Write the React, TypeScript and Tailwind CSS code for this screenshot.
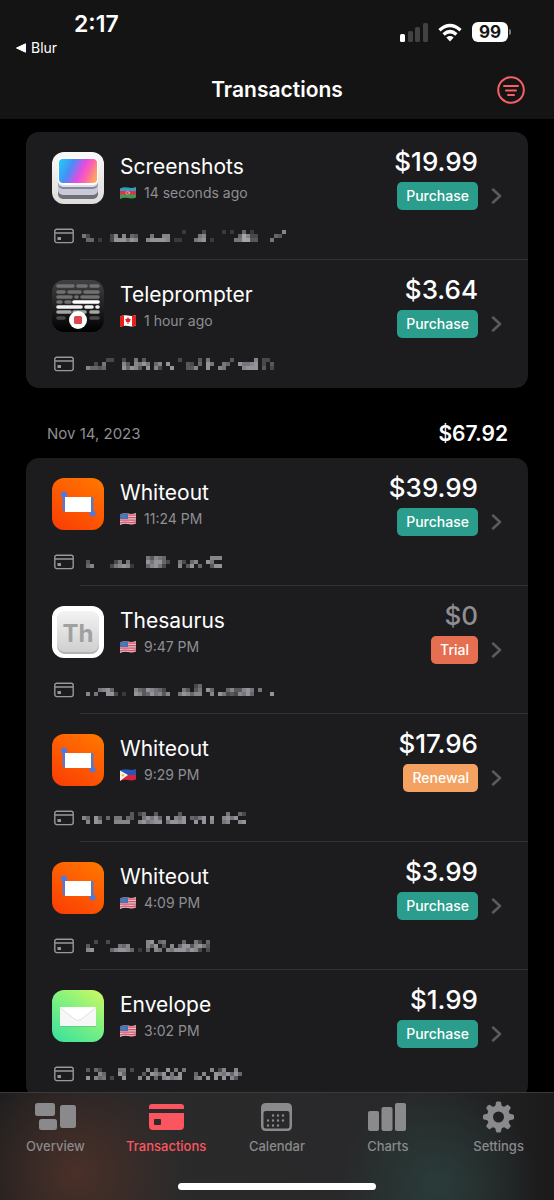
import type { ReactNode } from "react";

type Kind = "Purchase" | "Trial" | "Renewal";
type AppName = "Screenshots" | "Teleprompter" | "Whiteout" | "Thesaurus" | "Envelope";
type Country = "az" | "ca" | "us" | "ph";

interface Transaction {
  app: AppName;
  country: Country;
  time: string;
  price: string;
  kind: Kind;
  // Three rows of mosaic cells, each cell is column * 10 + tone
  mosaic: number[][];
}

const latest: Transaction[] = [
  {
    app: "Screenshots",
    country: "az",
    time: "14 seconds ago",
    price: "$19.99",
    kind: "Purchase",
    mosaic: [
      [252, 303, 352, 372, 405, 422, 507],
      [6, 13, 73, 87, 107, 125, 134, 176, 207, 217, 296, 307, 395, 409, 417, 423, 433, 485, 494],
      [15, 25, 42, 73, 88, 98, 108, 116, 128, 137, 167, 178, 188, 198, 208, 217, 232, 242, 286, 297, 308, 322, 386, 396, 409, 419, 424, 434, 476],
    ],
  },
  {
    app: "Teleprompter",
    country: "ca",
    time: "1 hour ago",
    price: "$3.64",
    kind: "Purchase",
    mosaic: [
      [63, 73, 103, 136, 154, 243, 294, 316, 374, 437, 453, 463],
      [33, 56, 107, 114, 137, 146, 158, 166, 185, 197, 218, 264, 273, 295, 318, 326, 356, 365, 398, 406, 416, 427, 438, 453, 474],
      [17, 25, 35, 44, 55, 108, 115, 128, 137, 144, 168, 187, 193, 228, 264, 274, 287, 318, 347, 356, 407, 418, 428, 438, 454, 473],
    ],
  },
];

const november: Transaction[] = [
  {
    app: "Whiteout",
    country: "us",
    time: "11:24 PM",
    price: "$39.99",
    kind: "Purchase",
    mosaic: [
      [166, 174, 187, 196, 205, 327, 337, 347],
      [14, 83, 96, 116, 168, 176, 188, 198, 205, 213, 246, 253, 275, 287, 318, 326],
      [15, 27, 73, 86, 97, 108, 117, 122, 165, 177, 188, 196, 203, 247, 264, 278, 295, 324, 338, 348],
    ],
  },
  {
    app: "Thesaurus",
    country: "us",
    time: "9:47 PM",
    price: "$0",
    kind: "Trial",
    mosaic: [
      [283, 295],
      [46, 57, 68, 75, 137, 145, 154, 168, 177, 186, 195, 203, 256, 264, 284, 296, 318, 325, 365, 377, 384, 394, 407, 418, 426, 446],
      [17, 36, 68, 78, 83, 102, 138, 147, 154, 165, 178, 186, 197, 204, 217, 246, 258, 267, 275, 287, 297, 327, 348, 356, 363, 374, 383, 397, 406, 418, 425, 478],
    ],
  },
  {
    app: "Whiteout",
    country: "ph",
    time: "9:29 PM",
    price: "$17.96",
    kind: "Renewal",
    mosaic: [
      [124, 143, 155, 184, 244, 366, 395, 403],
      [7, 15, 38, 44, 65, 86, 96, 115, 124, 156, 168, 176, 188, 195, 218, 237, 246, 258, 275, 284, 296, 308, 328, 357, 368, 376, 388],
      [17, 38, 47, 87, 97, 107, 117, 147, 158, 166, 177, 188, 198, 216, 228, 238, 247, 258, 288, 308, 327, 356, 367, 397, 408],
    ],
  },
  {
    app: "Whiteout",
    country: "us",
    time: "4:09 PM",
    price: "$3.99",
    kind: "Purchase",
    mosaic: [
      [33, 63, 167, 178, 195, 206, 255, 286, 293, 315],
      [14, 96, 105, 117, 167, 175, 188, 204, 227, 245, 258, 268, 274, 287, 298, 306, 314],
      [17, 28, 75, 87, 98, 108, 117, 125, 142, 165, 187, 196, 217, 226, 238, 248, 258, 266, 278, 287, 293, 313],
    ],
  },
  {
    app: "Envelope",
    country: "us",
    time: "3:02 PM",
    price: "$1.99",
    kind: "Purchase",
    mosaic: [
      [14, 35, 43, 96, 106, 123, 167, 185, 218, 236, 256, 327, 343, 357, 387],
      [47, 55, 98, 105, 154, 178, 187, 195, 208, 226, 248, 285, 307, 338, 347, 356, 368, 375, 388, 395],
      [18, 37, 45, 56, 73, 108, 147, 168, 185, 207, 218, 226, 237, 248, 286, 297, 318, 338, 358, 377, 384],
    ],
  },
];

const badgeColors: Record<Kind, string> = {
  Purchase: "bg-[#2a9d8c]",
  Trial: "bg-[#e76f51]",
  Renewal: "bg-[#f4a261]",
};

const appIcons: Record<AppName, ReactNode> = {
  Screenshots: (
    <>
      <defs>
        <linearGradient id="shotFace" x1="0" y1="0.3" x2="1" y2="0.6">
          <stop offset="0" stopColor="#22c4f4" />
          <stop offset="0.3" stopColor="#4a8cf8" />
          <stop offset="0.6" stopColor="#e94be0" />
          <stop offset="0.8" stopColor="#fb6aa4" />
          <stop offset="1" stopColor="#fda463" />
        </linearGradient>
        <linearGradient id="shotBg" x1="0" y1="0" x2="0" y2="1">
          <stop offset="0" stopColor="#fafafa" />
          <stop offset="1" stopColor="#dddcda" />
        </linearGradient>
      </defs>
      <rect width="52" height="52" rx="12" fill="url(#shotBg)" />
      <rect x="6" y="30" width="40" height="17" rx="5" fill="#6f6f77" />
      <rect x="6" y="27" width="40" height="16" rx="5" fill="#c9cad8" />
      <rect x="6" y="25" width="40" height="12" rx="5" fill="#85879c" />
      <rect x="6" y="22" width="40" height="13" rx="5" fill="#dcdde8" />
      <rect x="6" y="5" width="40" height="28" rx="5" fill="#fff" />
      <rect x="7" y="7" width="38" height="24" rx="4" fill="url(#shotFace)" />
    </>
  ),
  Teleprompter: (
    <>
      <defs>
        <linearGradient id="teleBg" x1="0" y1="0" x2="0" y2="1">
          <stop offset="0" stopColor="#414141" />
          <stop offset="1" stopColor="#000" />
        </linearGradient>
      </defs>
      <rect width="52" height="52" rx="12" fill="url(#teleBg)" />
      <g strokeWidth="3.600" strokeLinecap="round" stroke="#707070">
        <path d="M6 6h15M26 6h8M39 6h7M6 12h6M17 12h11M33 12h13M6 17h13M24 17h1M30 17h16M6 22h3M14 22h4" />
        <path d="M22 22h24" stroke="#fff" />
        <path d="M6 27h23M34 27h6M45 27h1" stroke="#f2f2f2" />
        <path d="M6 32h12M22 32h11M39 32h7" stroke="#a5a5a5" />
        <path d="M6 38h6M39 38h7" stroke="#4a4a4a" />
      </g>
      <circle cx="26" cy="40" r="9" fill="#fff" />
      <rect x="22" y="36" width="8" height="8" rx="1.500" fill="#e0454c" />
    </>
  ),
  Whiteout: (
    <>
      <defs>
        <linearGradient id="whiteoutBg" x1="0.8" y1="0" x2="0.2" y2="1">
          <stop offset="0" stopColor="#ff7400" />
          <stop offset="1" stopColor="#fb4003" />
        </linearGradient>
      </defs>
      <rect width="52" height="52" rx="12" fill="url(#whiteoutBg)" />
      <path d="M12 17v16M40 19v16" stroke="#4b7be0" strokeWidth="2.600" />
      <circle cx="12" cy="16.500" r="3" fill="#4b7be0" />
      <circle cx="40.500" cy="35.500" r="3" fill="#4b7be0" />
      <rect x="13" y="19" width="26" height="15" fill="#fff" />
    </>
  ),
  Thesaurus: (
    <>
      <defs>
        <linearGradient id="thesBg" x1="0" y1="0" x2="0" y2="1">
          <stop offset="0" stopColor="#f3f3f3" />
          <stop offset="1" stopColor="#cfcfcf" />
        </linearGradient>
      </defs>
      <rect width="52" height="52" rx="12" fill="#fff" />
      <rect x="5" y="6" width="42" height="42" rx="8" fill="#b4b4b4" />
      <rect x="5" y="5" width="42" height="41" rx="8" fill="url(#thesBg)" />
      <text x="26" y="36" textAnchor="middle" fontSize="24" fontWeight="700" fill="#a0a0a0">
        Th
      </text>
    </>
  ),
  Envelope: (
    <>
      <defs>
        <linearGradient id="envBg" x1="0.9" y1="0" x2="0.2" y2="1">
          <stop offset="0" stopColor="#c9f962" />
          <stop offset="0.5" stopColor="#7cf082" />
          <stop offset="1" stopColor="#41e39a" />
        </linearGradient>
      </defs>
      <rect width="52" height="52" rx="12" fill="url(#envBg)" />
      <rect x="8" y="18" width="36" height="19" fill="#5fae74" opacity="0.5" />
      <rect x="8" y="17" width="36" height="19" fill="#f7f7f7" />
      <path d="M8 17l15 12q3 2 6 0L44 17z" fill="#fff" />
      <path d="M8 17.500l15 12q3 2 6 0L44 17.500" fill="none" stroke="#e2e4e3" strokeWidth="1" />
    </>
  ),
};

const flags: Record<Country, ReactNode> = {
  az: (
    <>
      <path d="M0 1.500q4-2 8-1t8-.5v4H0z" fill="#2f9fc4" />
      <path d="M0 4h16v4H0z" fill="#e0304a" />
      <path d="M0 7.500h16v3q-4 1.500-8 .5t-8 1z" fill="#3d9b4b" />
      <circle cx="7.500" cy="5.800" r="1.500" fill="none" stroke="#e9b9c4" strokeWidth="0.700" />
      <circle cx="9.500" cy="5.800" r="0.700" fill="#e9b9c4" />
    </>
  ),
  ca: (
    <>
      <path d="M0 1.500q4-2 8-1t8-.5v10.500q-4 1.500-8 .5t-8 1z" fill="#fff" />
      <path d="M0 1.500q2-1 4-1.200v10.900q-2 0-4 .8zM12 .5q2 0 4-.5v10.500q-2 .8-4 .8z" fill="#e5201d" />
      <path d="M8 2l1 1.800 1.800.2-1 3H8.500v2h-1V7H6.200l-1-3L7 3.800z" fill="#e5201d" />
    </>
  ),
  us: (
    <>
      <path d="M0 1.500q4-2 8-1t8-.5v10.500q-4 1.500-8 .5t-8 1z" fill="#e6c3c9" />
      <path d="M8 2.200h8M8 4.600h8M0 7.200h16M0 9.800q4-1 8-.4t8-.4" fill="none" stroke="#d9546a" strokeWidth="1.300" />
      <path d="M0 1.500q4-2 8-1v5.500H0z" fill="#4a6fae" />
      <path d="M1.500 2.500h5M1.500 4.300h5" stroke="#8fa6d0" strokeWidth="0.600" strokeDasharray="0.700 0.900" />
    </>
  ),
  ph: (
    <>
      <path d="M0 1.500q4-2 8-1t8-.5v6H0z" fill="#2a55b8" />
      <path d="M0 6h16v4.500q-4 1.500-8 .5t-8 1z" fill="#d8233b" />
      <path d="M0 1.500L8 6l-8 6z" fill="#f4f4ee" />
      <circle cx="2.800" cy="6.300" r="1.300" fill="#f3c32f" />
    </>
  ),
};

function CardIcon() {
  return (
    <svg width="20" height="16" viewBox="0 0 20 16" fill="none" stroke="#98989c" strokeWidth="1.400" aria-hidden="true">
      <rect x="0.800" y="1.200" width="18.400" height="13.400" rx="2" />
      <path d="M1 5h18" strokeWidth="1.500" />
      <rect x="3.500" y="9" width="3.500" height="3" rx="0.500" fill="#98989c" stroke="none" />
    </svg>
  );
}

function Mosaic({ rows }: { rows: number[][] }) {
  return (
    <svg width="206" height="12" viewBox="0 0 206 12" shapeRendering="crispEdges" aria-hidden="true">
      {rows.map((row, y) =>
        row.map((cell) => (
          <rect
            key={`${y}-${cell}`}
            x={Math.floor(cell / 10) * 4}
            y={y * 4}
            width="4"
            height="4"
            fill="#b2b2b8"
            opacity={(cell % 10) / 10}
          />
        ))
      )}
    </svg>
  );
}

function TransactionRow({ item, last }: { item: Transaction; last: boolean }) {
  return (
    <li className="relative h-32">
      <a href="#" className="block pt-5 pl-[26px] pr-[26px]">
        <div className="flex items-start">
          <svg className="shrink-0" width="52" height="52" viewBox="0 0 52 52" aria-hidden="true">
            {appIcons[item.app]}
          </svg>
          <div className="ml-4 flex-1 pt-px">
            <h3 className="text-[21px] leading-[28px] font-normal text-white">{item.app}</h3>
            <p className="flex items-center gap-2 text-sm leading-[24px] text-[#8e8e93]">
              <svg width="16" height="12" viewBox="0 0 16 12" aria-hidden="true">
                {flags[item.country]}
              </svg>
              {item.time}
            </p>
          </div>
          <div className="-mt-1 flex flex-col items-end">
            <span
              className={
                item.kind === "Trial"
                  ? "text-[26px] leading-[28px] font-medium text-[#8e8e93]"
                  : "text-[26px] leading-[28px] font-medium text-white"
              }
            >
              {item.price}
            </span>
            <span className={`mt-[6px] rounded-[5px] px-[9px] text-sm leading-[28px] font-medium text-white ${badgeColors[item.kind]}`}>
              {item.kind}
            </span>
          </div>
          <svg className="mt-9 ml-[13px]" width="11" height="16" viewBox="0 0 11 16" fill="none" stroke="#5b5b5f" strokeWidth="2.500" strokeLinecap="round" strokeLinejoin="round" aria-hidden="true">
            <path d="M2 1.500L9 8l-7 6.500" />
          </svg>
        </div>
        <div className="mt-[18px] flex items-center gap-2 pl-[2px]">
          <CardIcon />
          <Mosaic rows={item.mosaic} />
        </div>
      </a>
      {!last && <div className="absolute right-0 bottom-0 left-[54px] h-px bg-[#323234]" />}
    </li>
  );
}

function TransactionList({ items }: { items: Transaction[] }) {
  return (
    <ul className="mx-[26px] overflow-hidden rounded-[13px] bg-[#1c1c1e]">
      {items.map((item, i) => (
        <TransactionRow key={i} item={item} last={i === items.length - 1} />
      ))}
    </ul>
  );
}

const tabs: { label: string; icon: ReactNode }[] = [
  {
    label: "Overview",
    icon: (
      <>
        <rect x="0" y="2" width="20" height="13" rx="2.500" />
        <rect x="4" y="18" width="18" height="11" rx="2.500" />
        <rect x="25" y="4" width="16" height="23" rx="2.500" />
      </>
    ),
  },
  {
    label: "Transactions",
    icon: (
      <>
        <path d="M3 8V6q0-3 3-3h29q3 0 3 3v2z" />
        <path fillRule="evenodd" d="M3 12h35v13q0 4-4 4H7q-4 0-4-4zM8 19v4q0 1 1 1h5q1 0 1-1v-4q0-1-1-1H9q-1 0-1 1z" />
      </>
    ),
  },
  {
    label: "Calendar",
    icon: (
      <>
        <path fillRule="evenodd" d="M10 2h21q5 0 5 5v18q0 5-5 5H10q-5 0-5-5V7q0-5 5-5zM10 10q-2.500 0-2.500 2v13q0 2.500 2.500 2.500h21q2.500 0 2.500-2.500V12q0-2-2.500-2z" />
        <path d="M17 14.500h13M12 19.500h18M12 24.500h13" stroke="currentColor" strokeWidth="2.400" strokeLinecap="round" strokeDasharray="0 5" />
      </>
    ),
  },
  {
    label: "Charts",
    icon: (
      <>
        <rect x="1" y="10" width="11" height="20" rx="2" />
        <rect x="14.500" y="6" width="11" height="24" rx="2" />
        <rect x="28" y="2" width="11" height="28" rx="2" />
      </>
    ),
  },
  {
    label: "Settings",
    icon: (
      <g>
        <path fillRule="evenodd" d="M20.500 4.500a11.500 11.500 0 1 1 0 23a11.500 11.500 0 1 1 0-23zM20.500 10.500a5.500 5.500 0 1 0 0 11a5.500 5.500 0 1 0 0-11z" />
        {[0, 45, 90, 135, 180, 225, 270, 315].map((angle) => (
          <path key={angle} d="M17 6l1-4.500q.3-1 1.300-1h2.400q1 0 1.300 1L24 6z" transform={`rotate(${angle} 20.5 16)`} />
        ))}
      </g>
    ),
  },
];

export default function App() {
  return (
    <div className="flex h-screen flex-col overflow-hidden bg-black font-['Inter','Liberation_Sans',sans-serif] text-white">
      <header className="h-[119px] shrink-0 bg-[#141414]">
        <div className="flex h-[60px] items-start justify-between pr-[43px] pl-4">
          <div className="pt-[10px]">
            <div className="pl-[58px] text-[23px] leading-[28px] font-semibold">2:17</div>
            <a href="#" className="flex items-center gap-[5px] text-sm leading-[20px]">
              <svg width="10" height="10" viewBox="0 0 10 10" fill="currentColor" aria-hidden="true">
                <path d="M9.500.8v8.400L.5 5z" stroke="currentColor" strokeLinejoin="round" />
              </svg>
              Blur
            </a>
          </div>
          <div className="flex items-center gap-[10px] pt-[22px]">
            <svg width="28" height="20" viewBox="0 0 28 20" fill="#424242" aria-hidden="true">
              <rect x="0" y="12" width="5" height="8" rx="1.500" fill="#fff" />
              <rect x="8" y="9" width="5" height="11" rx="1.500" />
              <rect x="15" y="5" width="5" height="15" rx="1.500" />
              <rect x="23" y="1" width="5" height="19" rx="1.500" />
            </svg>
            <svg width="24" height="19" viewBox="0 0 24 19" fill="none" stroke="#fff" strokeWidth="3.400" aria-hidden="true">
              <path d="M1.500 7.200q10.500-9.400 21 0" />
              <path d="M5.600 11.500q6.400-5.800 12.800 0" />
              <path d="M12 18.500l-3.700-4q3.700-2.800 7.400 0z" fill="#fff" stroke="none" />
            </svg>
            <div className="flex items-center gap-px">
              <span className="rounded-md bg-white px-[7px] text-[17px] leading-[20px] font-bold text-[#141414]">99</span>
              <span className="h-[6px] w-[2px] rounded-r-full bg-[#777]" />
            </div>
          </div>
        </div>
        <div className="grid h-[59px] grid-cols-[1fr_auto_1fr] items-center">
          <h1 className="col-start-2 text-[21px] leading-[28px] font-semibold">Transactions</h1>
          <button type="button" aria-label="Filter" className="mr-7 justify-self-end text-[#f55f66]">
            <svg width="30" height="30" viewBox="0 0 30 30" fill="none" stroke="currentColor" strokeWidth="2" strokeLinecap="round" aria-hidden="true">
              <circle cx="15" cy="15" r="12.800" />
              <path d="M8 11h14M10 15.500h10M12 20h6" />
            </svg>
          </button>
        </div>
      </header>

      <main className="min-h-0 flex-1 overflow-hidden pt-[13px]">
        <TransactionList items={latest} />
        <div className="flex h-[70px] items-center justify-between pt-[22px] pr-[46px] pl-[47px]">
          <h2 className="text-[15px] font-normal text-[#8e8e93]">Nov 14, 2023</h2>
          <span className="text-[21px] font-semibold">$67.92</span>
        </div>
        <TransactionList items={november} />
      </main>

      <nav className="shrink-0 border-t border-[#3a3a3b] bg-[#28282a] bg-[radial-gradient(circle_at_14%_75%,#4a3028_0,transparent_22%),radial-gradient(circle_at_79%_85%,#293c39_0,transparent_22%),linear-gradient(90deg,#201f1f_0,#2a2a2b_30%,#28282a_75%,#1b1b1c_100%)]">
        <div className="grid grid-cols-5 pt-2">
          {tabs.map((tab) => (
            <a
              key={tab.label}
              href="#"
              aria-current={tab.label === "Transactions" ? "page" : undefined}
              className={
                tab.label === "Transactions"
                  ? "flex flex-col items-center gap-[3px] text-[#fb5660]"
                  : "flex flex-col items-center gap-[3px] text-[#8a898b]"
              }
            >
              <svg width="41" height="32" viewBox="0 0 41 32" fill="currentColor" aria-hidden="true">
                {tab.icon}
              </svg>
              <span className="text-[13px] leading-[20px] font-medium">{tab.label}</span>
            </a>
          ))}
        </div>
        <div className="flex h-[44px] items-end justify-center pb-[10px]">
          <div className="h-[7px] w-[198px] rounded-full bg-white" />
        </div>
      </nav>
    </div>
  );
}
